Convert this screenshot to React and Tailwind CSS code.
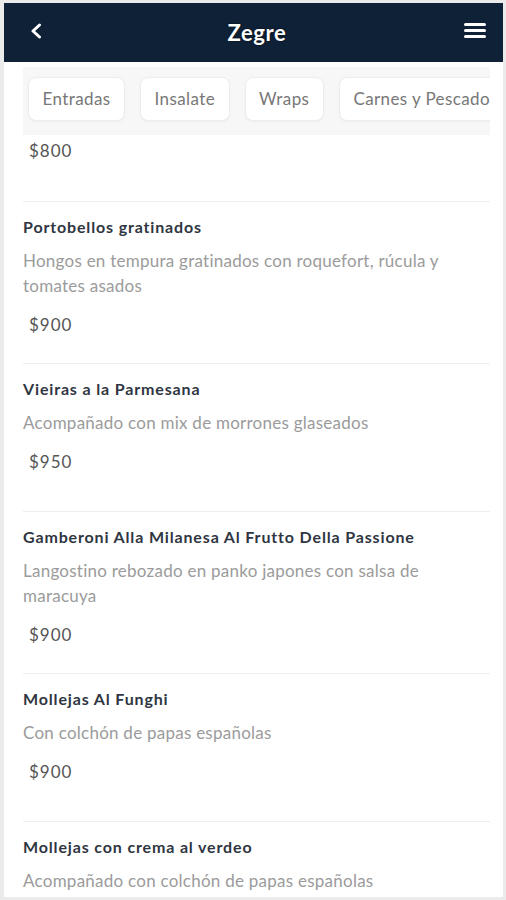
import React from "react";

const categories = ["Entradas", "Insalate", "Wraps", "Carnes y Pescados", "Postres"];

const items = [
  {
    name: "Portobellos gratinados",
    desc: "Hongos en tempura gratinados con roquefort, rúcula y tomates asados",
    price: "$900",
  },
  {
    name: "Vieiras a la Parmesana",
    desc: "Acompañado con mix de morrones glaseados",
    price: "$950",
  },
  {
    name: "Gamberoni Alla Milanesa Al Frutto Della Passione",
    desc: "Langostino rebozado en panko japones con salsa de maracuya",
    price: "$900",
  },
  {
    name: "Mollejas Al Funghi",
    desc: "Con colchón de papas españolas",
    price: "$900",
  },
  {
    name: "Mollejas con crema al verdeo",
    desc: "Acompañado con colchón de papas españolas",
    price: "$900",
  },
];

export default function App() {
  return (
    <div
      className="w-[506px] h-[900px] bg-[#ebebeb] pt-[3px] pl-[4px] pr-[3px] pb-[3px]"
      style={{ fontFamily: "Lato, 'Open Sans', sans-serif" }}
    >
      <div className="h-full bg-white overflow-hidden flex flex-col">
        {/* Navbar */}
        <div className="h-[59px] shrink-0 bg-[#0f2137] flex items-center justify-between pl-[26px] pr-[17px]">
          <svg width="12" height="16" viewBox="0 0 12 16" className="mt-[-3px]">
            <polyline points="9.5,2 3,8 9.5,14" fill="none" stroke="white" strokeWidth="3" strokeLinecap="round" strokeLinejoin="round" />
          </svg>
          <p className="text-white text-[22px] font-bold tracking-[0.6px] ml-[8px] [text-shadow:0_0_2px_rgba(0,0,0,0.8)]">Zegre</p>
          <div className="flex flex-col gap-[3px] w-[22px] mt-[-4px]">
            <span className="h-[3px] bg-white rounded-sm" />
            <span className="h-[3px] bg-white rounded-sm" />
            <span className="h-[3px] bg-white rounded-sm" />
          </div>
        </div>

        <div className="pl-[19px] pr-[13px]">
          {/* Categories */}
          <div className="mt-[5px] h-[68px] bg-[#f7f7f7] pt-[10px] pl-[5px] overflow-hidden">
            <div className="flex gap-[15px] whitespace-nowrap">
              {categories.map((c) => (
                <div
                  key={c}
                  className="h-[44px] px-[13.5px] flex items-center bg-white border border-[#ececec] rounded-[8px] shadow-[0_1px_2px_rgba(0,0,0,0.04)] text-[17px] tracking-[0.4px] text-[#777]"
                >
                  {c}
                </div>
              ))}
            </div>
          </div>

          {/* Partial previous item */}
          <div className="pt-[4px] pb-[38px]">
            <p className="pl-[6px] leading-[24px] text-[17px] tracking-[1px] text-[#555]">$800</p>
          </div>

          {/* Items */}
          {items.map((it, i) => (
            <div key={i} className="border-t border-[#eeeeee] pt-[15px] pb-[26px] min-h-[148px]">
              <p className="leading-[20px] text-[16px] tracking-[0.85px] font-bold text-[#2f3642]">{it.name}</p>
              <p className="mt-[11px] leading-[25px] text-[17px] tracking-[0.25px] text-[#9b9b9b] pr-[30px]">{it.desc}</p>
              <p className="mt-[15px] pl-[6px] leading-[24px] text-[17px] tracking-[1px] text-[#555]">{it.price}</p>
            </div>
          ))}
        </div>
      </div>
    </div>
  );
}
